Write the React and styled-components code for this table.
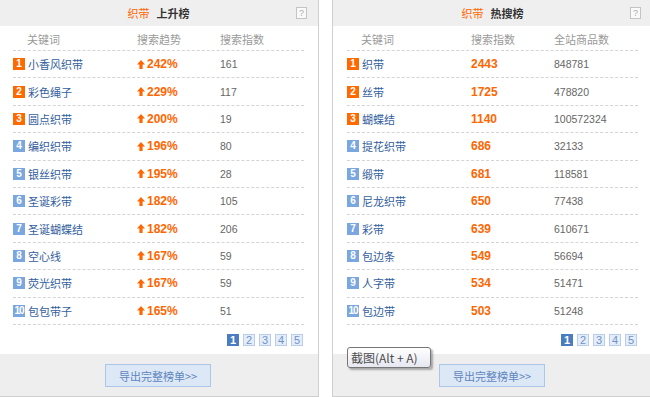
import React from 'react';
import styled, { createGlobalStyle } from 'styled-components';

const GlobalStyle = createGlobalStyle`
  html, body {
    margin: 0;
    padding: 0;
    background: #fff;
    overflow: hidden;
  }
  body {
    width: 650px;
    height: 397px;
    font-family: "Noto Sans CJK SC", "Liberation Sans", sans-serif;
  }
`;

const Page = styled.div`
  position: relative;
  display: flex;
  gap: 13px;
  margin: -1px 0 0 -2px;
  width: 680px;
`;

const Panel = styled.div`
  width: 321px;
  height: 398px;
  box-sizing: border-box;
  border: 1px solid #cfcfcf;
  display: flex;
  flex-direction: column;
  flex-shrink: 0;
  background: #fff;
`;

const Header = styled.div`
  position: relative;
  height: 26px;
  background: #efefef;
  display: flex;
  align-items: center;
  justify-content: center;
  gap: 7px;
  font-size: 11px;
`;

const Brand = styled.span`
  color: #ff6600;
`;

const Title = styled.span`
  color: #333;
  font-weight: bold;
`;

const Help = styled.span`
  position: absolute;
  right: 11px;
  top: 7px;
  width: 9px;
  height: 10px;
  border: 1px solid #c4c4c4;
  background: #fafafa;
  color: #aaa;
  font: 9px/10px "Liberation Sans", sans-serif;
  text-align: center;
`;

const Body = styled.div`
  flex: 1;
  padding: 0 14px;
  display: flex;
  flex-direction: column;
`;

const Grid = styled.div`
  display: grid;
  grid-template-columns: 124px 83px 1fr;
  align-items: center;
  box-sizing: border-box;
  border-bottom: 1px dashed #d4d4d4;
  height: ${p => (p.$head ? '25px' : '27.4px')};
`;

const ColHead = styled.span`
  color: #9a9a9a;
  font-size: 11px;
  padding-left: ${p => (p.$first ? '14px' : '0')};
  padding-top: 1px;
`;

const Keyword = styled.span`
  display: flex;
  align-items: center;
  gap: 3px;
  color: #33609e;
  font-size: 11px;
`;

const Rank = styled.span`
  width: 12px;
  height: 12px;
  background: ${p => (p.$top ? '#ff6a00' : '#7aa7e0')};
  color: #fff;
  font: bold 10px/12px "Liberation Sans", sans-serif;
  letter-spacing: ${p => (p.$wide ? '-1px' : '0')};
  text-align: center;
  flex-shrink: 0;
  overflow: hidden;
  white-space: nowrap;
`;

const Hot = styled.span`
  display: flex;
  align-items: center;
  gap: 2px;
  color: #ff6600;
  font: bold 12px "Liberation Sans", sans-serif;
`;

const Plain = styled.span`
  color: #666;
  font: 10.5px "Liberation Sans", sans-serif;
`;

const Pager = styled.div`
  display: flex;
  justify-content: flex-end;
  gap: 4px;
  margin: 9px 1px 0 0;
`;

const PageBtn = styled.span`
  width: 12px;
  height: 12px;
  box-sizing: border-box;
  border: 1px solid ${p => (p.$on ? '#4a7cc4' : '#b7cdec')};
  background: ${p => (p.$on ? '#4a7cc4' : '#e4edf9')};
  color: ${p => (p.$on ? '#fff' : '#6f93c8')};
  font: ${p => (p.$on ? 'bold ' : '')}11px/10px "Liberation Sans", sans-serif;
  text-align: center;
`;

const Footer = styled.div`
  height: 42px;
  background: #eeeeee;
  display: flex;
  justify-content: center;
  padding-top: 10px;
  box-sizing: border-box;
`;

const Export = styled.button`
  width: 106px;
  height: 23px;
  margin-left: -1px;
  border: 1px solid #abc6e8;
  background: #dde8f6;
  color: #5e86bf;
  font-family: "Noto Sans CJK SC", sans-serif;
  font-size: 11px;
  padding: 0;
  cursor: pointer;
`;

const Tip = styled.div`
  position: absolute;
  left: 349px;
  top: 348px;
  width: 84px;
  height: 21px;
  box-sizing: border-box;
  border: 1px solid #767676;
  border-radius: 3px;
  background: linear-gradient(#ffffff, #e6e7f0);
  box-shadow: 2px 2px 2px rgba(0, 0, 0, 0.3);
  color: #4c4c4c;
  font-size: 12px;
  line-height: 19px;
  padding-left: 3px;
  white-space: nowrap;
`;

const UpArrow = () => (
  <svg width="8" height="9" viewBox="0 0 8 9">
    <polygon points="4,0 8,4.5 5.6,4.5 5.6,9 2.4,9 2.4,4.5 0,4.5" fill="#ff6600" />
  </svg>
);

const rising = [
  ['小香风织带', '242%', '161'],
  ['彩色绳子', '229%', '117'],
  ['圆点织带', '200%', '19'],
  ['编织织带', '196%', '80'],
  ['银丝织带', '195%', '28'],
  ['圣诞彩带', '182%', '105'],
  ['圣诞蝴蝶结', '182%', '206'],
  ['空心线', '167%', '59'],
  ['荧光织带', '167%', '59'],
  ['包包带子', '165%', '51'],
];

const hot = [
  ['织带', '2443', '848781'],
  ['丝带', '1725', '478820'],
  ['蝴蝶结', '1140', '100572324'],
  ['提花织带', '686', '32133'],
  ['缎带', '681', '118581'],
  ['尼龙织带', '650', '77438'],
  ['彩带', '639', '610671'],
  ['包边条', '549', '56694'],
  ['人字带', '534', '51471'],
  ['包边带', '503', '51248'],
];

const Board = ({ title, cols, rows, arrow }) => (
  <Panel>
    <Header>
      <Brand>织带</Brand>
      <Title>{title}</Title>
      <Help>?</Help>
    </Header>
    <Body>
      <Grid $head>
        <ColHead $first>{cols[0]}</ColHead>
        <ColHead>{cols[1]}</ColHead>
        <ColHead>{cols[2]}</ColHead>
      </Grid>
      {rows.map(([word, val, count], i) => (
        <Grid key={word + i}>
          <Keyword>
            <Rank $top={i < 3} $wide={i === 9}>{i + 1}</Rank>
            {word}
          </Keyword>
          <Hot>
            {arrow && <UpArrow />}
            {val}
          </Hot>
          <Plain>{count}</Plain>
        </Grid>
      ))}
      <Pager>
        {[1, 2, 3, 4, 5].map(n => (
          <PageBtn key={n} $on={n === 1}>{n}</PageBtn>
        ))}
      </Pager>
    </Body>
    <Footer>
      <Export>导出完整榜单&gt;&gt;</Export>
    </Footer>
  </Panel>
);

export default function App() {
  return (
    <>
      <GlobalStyle />
      <Page>
        <Board title="上升榜" cols={['关键词', '搜索趋势', '搜索指数']} rows={rising} arrow />
        <Board title="热搜榜" cols={['关键词', '搜索指数', '全站商品数']} rows={hot} />
        <Tip>截图(Alt + A)</Tip>
      </Page>
    </>
  );
}
